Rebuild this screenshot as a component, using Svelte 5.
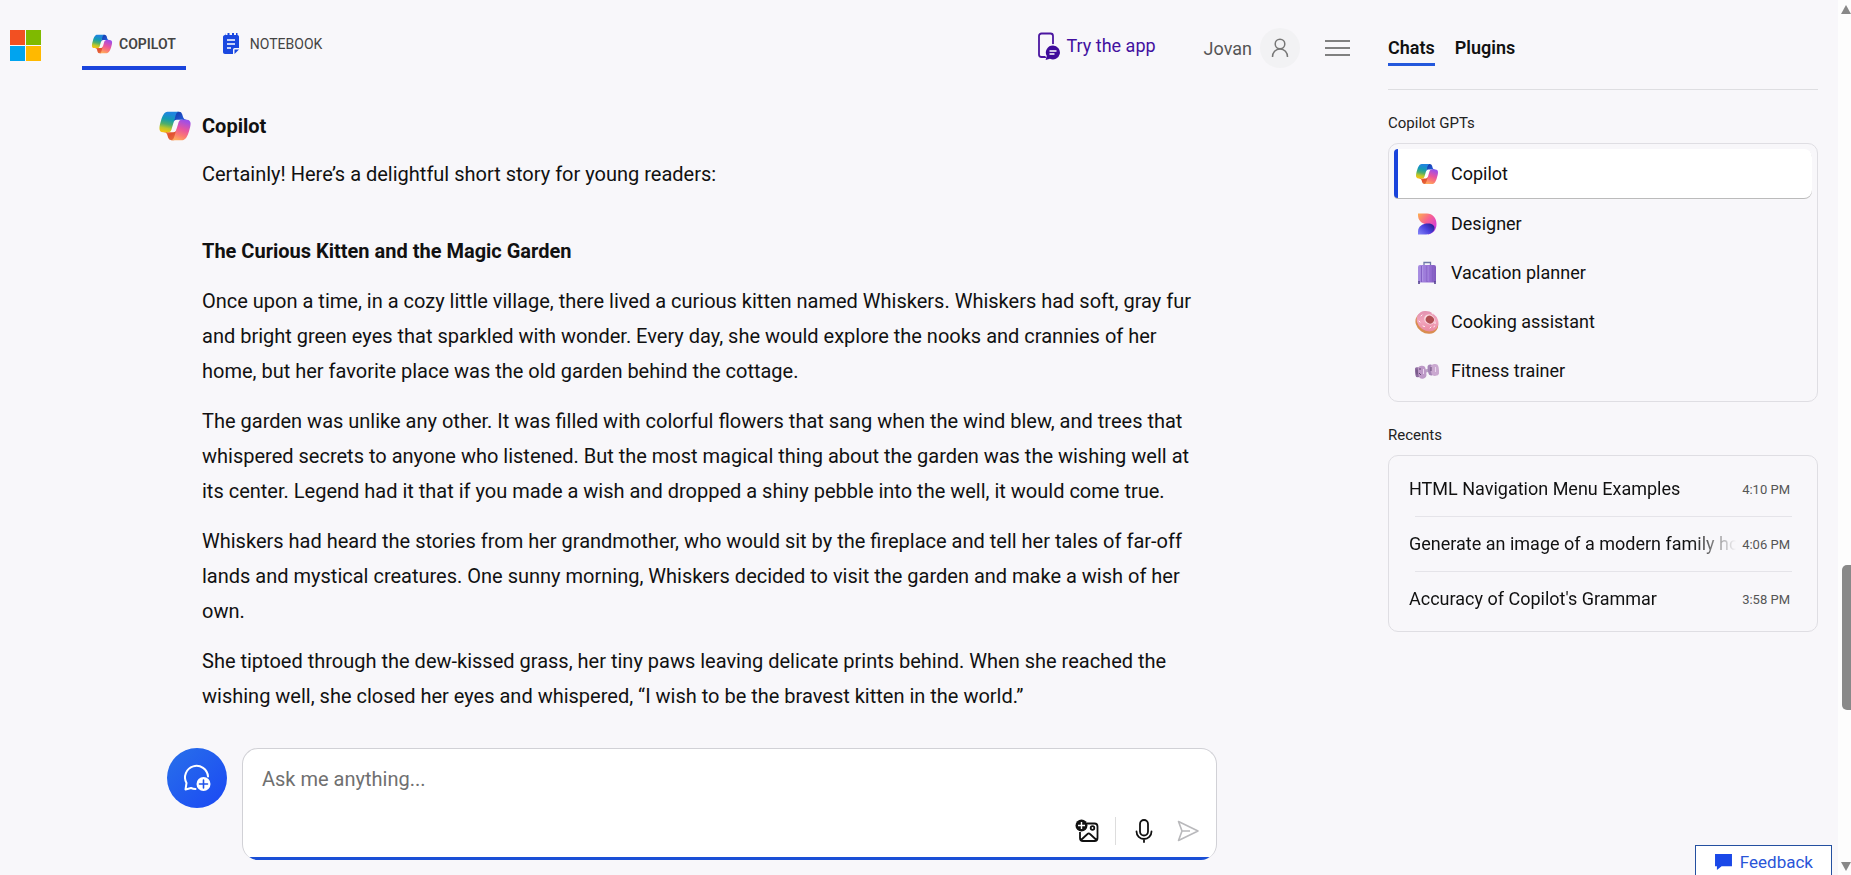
<script lang="ts">
    interface Gpt {
        name: string;
        icon: string;
    }

    interface Recent {
        title: string;
        time: string;
    }

    const gpts: Gpt[] = [
        { name: "Copilot", icon: "copilot" },
        { name: "Designer", icon: "designer" },
        { name: "Vacation planner", icon: "suitcase" },
        { name: "Cooking assistant", icon: "donut" },
        { name: "Fitness trainer", icon: "dumbbell" },
    ];

    const recents: Recent[] = [
        { title: "HTML Navigation Menu Examples", time: "4:10 PM" },
        { title: "Generate an image of a modern family hou", time: "4:06 PM" },
        { title: "Accuracy of Copilot's Grammar", time: "3:58 PM" },
    ];

    const story: string[] = [
        "Once upon a time, in a cozy little village, there lived a curious kitten named Whiskers. Whiskers had soft, gray fur and bright green eyes that sparkled with wonder. Every day, she would explore the nooks and crannies of her home, but her favorite place was the old garden behind the cottage.",
        "The garden was unlike any other. It was filled with colorful flowers that sang when the wind blew, and trees that whispered secrets to anyone who listened. But the most magical thing about the garden was the wishing well at its center. Legend had it that if you made a wish and dropped a shiny pebble into the well, it would come true.",
        "Whiskers had heard the stories from her grandmother, who would sit by the fireplace and tell her tales of far-off lands and mystical creatures. One sunny morning, Whiskers decided to visit the garden and make a wish of her own.",
        "She tiptoed through the dew-kissed grass, her tiny paws leaving delicate prints behind. When she reached the wishing well, she closed her eyes and whispered, “I wish to be the bravest kitten in the world.”",
    ];

    let activeGpt = $state("Copilot");
    let activePanel = $state("Chats");
    let prompt = $state("");
</script>

{#snippet copilotLogo(size: number)}
    <svg width={size} height={size} viewBox="0 0 48 48" aria-hidden="true">
        <path
            fill="url(#cp-top)"
            d="M34.14 7.33A4.63 4.63 0 0 0 29.7 4h-1.35a4.63 4.63 0 0 0-4.55 3.79l-2.32 12.62.58-1.97a4.63 4.63 0 0 1 4.44-3.33h7.85l3.3 1.28 3.17-1.28h-.92a4.63 4.63 0 0 1-4.45-3.33z"
        />
        <path
            fill="url(#cp-bottom)"
            d="M14.33 40.66A4.63 4.63 0 0 0 18.78 44h2.87a4.63 4.63 0 0 0 4.63-4.51l.31-12.16-.65 2.23a4.63 4.63 0 0 1-4.45 3.33h-7.92l-2.82-1.53-3.06 1.53h.92a4.63 4.63 0 0 1 4.44 3.34z"
        />
        <path
            fill="url(#cp-left)"
            d="M29.5 4H13.46C8.88 4 6.13 10.06 4.3 16.11 2.12 23.29-.72 32.89 7.5 32.89h6.93a4.63 4.63 0 0 0 4.45-3.36c1.36-4.75 3.94-13.4 5.52-18.6C25.4 7.4 26.5 4 29.5 4z"
        />
        <path
            fill="url(#cp-right)"
            d="M18.5 44h16.04c4.58 0 7.33-6.06 9.16-12.12 2.17-7.17 5.02-16.77-3.2-16.77h-6.93a4.63 4.63 0 0 0-4.46 3.36c-1.36 4.75-3.93 13.4-5.51 18.6C22.6 40.6 21.5 44 18.5 44z"
        />
    </svg>
{/snippet}

<!-- gradients shared by every icon on the page -->
<svg class="defs" width="0" height="0" aria-hidden="true">
    <defs>
        <linearGradient id="cp-left" x1="0.6" y1="0" x2="0.4" y2="1">
            <stop offset="0.1" stop-color="#1f86dd" />
            <stop offset="0.38" stop-color="#149cb0" />
            <stop offset="0.62" stop-color="#4fae6b" />
            <stop offset="0.82" stop-color="#bcc62b" />
            <stop offset="1" stop-color="#f3c313" />
        </linearGradient>
        <linearGradient id="cp-right" x1="0.7" y1="0" x2="0.35" y2="1">
            <stop offset="0.05" stop-color="#a04fe6" />
            <stop offset="0.45" stop-color="#e8559f" />
            <stop offset="0.75" stop-color="#fb7a72" />
            <stop offset="1" stop-color="#ffab5e" />
        </linearGradient>
        <linearGradient id="cp-top" x1="1" y1="0.8" x2="0.3" y2="0">
            <stop offset="0" stop-color="#2a63e8" />
            <stop offset="1" stop-color="#143fae" />
        </linearGradient>
        <linearGradient id="cp-bottom" x1="0" y1="0" x2="0.6" y2="1">
            <stop offset="0" stop-color="#f9a13a" />
            <stop offset="0.6" stop-color="#e2502f" />
            <stop offset="1" stop-color="#e66a3c" />
        </linearGradient>
        <linearGradient id="ds-top" x1="0" y1="0" x2="1" y2="1">
            <stop offset="0" stop-color="#fdb04c" />
            <stop offset="0.4" stop-color="#f8628f" />
            <stop offset="0.75" stop-color="#d93fd0" />
            <stop offset="1" stop-color="#8238ec" />
        </linearGradient>
        <linearGradient id="ds-bottom" x1="0" y1="0.8" x2="1" y2="0.1">
            <stop offset="0" stop-color="#7c7cf6" />
            <stop offset="0.5" stop-color="#4a3fdc" />
            <stop offset="1" stop-color="#251a86" />
        </linearGradient>
        <linearGradient id="case" x1="0" y1="0" x2="1" y2="0">
            <stop offset="0" stop-color="#a98fe2" />
            <stop offset="0.6" stop-color="#9871d6" />
            <stop offset="1" stop-color="#8059bd" />
        </linearGradient>
        <linearGradient id="glaze" x1="0" y1="0" x2="1" y2="1">
            <stop offset="0" stop-color="#dc8aab" />
            <stop offset="0.5" stop-color="#f2a5bd" />
            <stop offset="1" stop-color="#e67c96" />
        </linearGradient>
    </defs>
</svg>

<div class="page">
    <main>
        <header>
            <a class="brand" href="#home" aria-label="Microsoft">
                <svg width="31" height="31" viewBox="0 0 31 31">
                    <path fill="#f25022" d="M0 0h15v15H0z" />
                    <path fill="#7fba00" d="M16 0h15v15H16z" />
                    <path fill="#00a4ef" d="M0 16h15v15H0z" />
                    <path fill="#ffb900" d="M16 16h15v15H16z" />
                </svg>
            </a>
            <nav class="tabs">
                <a class="tab active" href="#copilot">
                    {@render copilotLogo(22)}
                    COPILOT
                </a>
                <a class="tab" href="#notebook">
                    <svg width="18" height="22" viewBox="0 0 18 22">
                        <path
                            fill="#1a48e0"
                            d="M3.5 0v2h2V0h2v2H10V0h2v2h2V0h1.5v2c1 .2 1.5 1 1.5 2v11h-4.5a1.5 1.5 0 0 0-1.500 1.5V21h-8c-1.200 0-2-.8-2-2V4c0-1 .8-2 2-2z"
                        />
                        <path fill="#1a48e0" d="M12.5 16.5H17L12.5 21z" />
                        <path
                            stroke="#fff"
                            stroke-width="1.3"
                            d="M5 7h8M5 11h8M5 15h4"
                        />
                    </svg>
                    NOTEBOOK
                </a>
            </nav>
            <div class="account">
                <a class="try-app" href="#app-download">
                    <svg width="24" height="28" viewBox="0 0 24 28">
                        <rect
                            x="2"
                            y="1.5"
                            width="14"
                            height="23.5"
                            rx="2.5"
                            fill="none"
                            stroke="#4b16a0"
                            stroke-width="1.8"
                        />
                        <circle cx="16" cy="20.5" r="8.5" fill="#f8f7fa" />
                        <path
                            fill="#3f0c9b"
                            d="M16 13.5a7 7 0 1 1-3.1 13.3L8.6 28l1.2-4A7 7 0 0 1 16 13.5z"
                        />
                        <path
                            stroke="#fff"
                            stroke-width="1.4"
                            stroke-linecap="round"
                            d="M13 19h6M13 22h4"
                        />
                    </svg>
                    Try the app
                </a>
                <button class="user">
                    Jovan
                    <span class="avatar">
                        <svg width="18" height="20" viewBox="0 0 18 20">
                            <g fill="none" stroke="#777" stroke-width="1.5">
                                <circle cx="9" cy="6" r="4.8" />
                                <path d="M1.500 19c0-4.5 3-8 7.5-8s7.5 3.5 7.5 8" />
                            </g>
                        </svg>
                    </span>
                </button>
                <button class="menu" aria-label="Menu">
                    <svg width="25" height="18" viewBox="0 0 25 18">
                        <path
                            stroke="#808080"
                            stroke-width="2"
                            d="M0 2h25M0 9h25M0 16h25"
                        />
                    </svg>
                </button>
            </div>
        </header>

        <article class="message">
            <div class="author">
                {@render copilotLogo(34)}
                <h2>Copilot</h2>
            </div>
            <div class="answer">
                <p class="intro">
                    Certainly! Here’s a delightful short story for young readers:
                </p>
                <h3>The Curious Kitten and the Magic Garden</h3>
                {#each story as paragraph (paragraph)}
                    <p>{paragraph}</p>
                {/each}
            </div>
        </article>

        <form class="composer" onsubmit={(e) => e.preventDefault()}>
            <button type="button" class="new-topic" aria-label="New topic">
                <svg width="30" height="30" viewBox="0 0 30 30">
                    <path
                        fill="none"
                        stroke="#fff"
                        stroke-width="2"
                        stroke-linecap="round"
                        stroke-linejoin="round"
                        d="M26 13.500A11.500 11.500 0 1 0 4.500 20L3.500 26.500l5.500-1.500a12 12 0 0 0 4.500 1"
                    />
                    <circle cx="21.5" cy="21" r="7" fill="#fff" />
                    <path
                        stroke="#1f52ea"
                        stroke-width="1.6"
                        stroke-linecap="round"
                        d="M21.5 17v8M17.5 21h8"
                    />
                </svg>
            </button>
            <div class="box">
                <textarea
                    rows="1"
                    aria-label="Ask me anything"
                    placeholder="Ask me anything..."
                    bind:value={prompt}
                ></textarea>
                <div class="tools">
                    <button type="button" aria-label="Add an image">
                        <svg width="24" height="24" viewBox="0 0 24 24">
                            <g
                                fill="none"
                                stroke="#111"
                                stroke-width="1.8"
                                stroke-linejoin="round"
                            >
                                <path
                                    d="M12 4.5h7.5a3 3 0 0 1 3 3V19a3 3 0 0 1-3 3H8a3 3 0 0 1-3-3v-6M6 21l6.5-6c.8-.8 1.7-.8 2.5 0l6.5 6"
                                />
                                <circle cx="17.5" cy="9" r="1.8" />
                            </g>
                            <circle cx="6.5" cy="6.5" r="6" fill="#111" />
                            <path
                                stroke="#fff"
                                stroke-width="1.4"
                                d="M6.500 3v7M3 6.500h7"
                            />
                        </svg>
                    </button>
                    <span class="divider"></span>
                    <button type="button" aria-label="Use microphone">
                        <svg width="24" height="24" viewBox="0 0 24 24">
                            <g
                                fill="none"
                                stroke="#111"
                                stroke-width="1.8"
                                stroke-linecap="round"
                            >
                                <rect x="8" y="1" width="8" height="15.5" rx="4" />
                                <path d="M4.500 12.500a7.500 7.500 0 0 0 15 0M12 20v3" />
                            </g>
                        </svg>
                    </button>
                    <button aria-label="Submit">
                        <svg width="24" height="24" viewBox="0 0 24 24">
                            <path
                                fill="none"
                                stroke="#b9b9bc"
                                stroke-width="1.6"
                                stroke-linejoin="round"
                                d="M2.5 2.5 22 12 2.5 21.5 6 12zM6 12h8"
                            />
                        </svg>
                    </button>
                </div>
                <div class="accent"></div>
            </div>
        </form>
    </main>

    <aside>
        <div class="panel-tabs">
            {#each ["Chats", "Plugins"] as panel (panel)}
                <button
                    class:selected={activePanel === panel}
                    onclick={() => (activePanel = panel)}
                >
                    {panel}
                </button>
            {/each}
        </div>

        <h4>Copilot GPTs</h4>
        <div class="card gpts">
            {#each gpts as gpt (gpt.name)}
                <button
                    class="gpt"
                    class:current={activeGpt === gpt.name}
                    onclick={() => (activeGpt = gpt.name)}
                >
                    {#if gpt.icon === "copilot"}
                        {@render copilotLogo(24)}
                    {:else if gpt.icon === "designer"}
                        <svg width="24" height="24" viewBox="0 0 24 24">
                            <path
                                fill="url(#ds-top)"
                                d="M3 1.5h9c5.500 0 9.500 4.500 9.500 10.500s-3.500 9.500-8.500 10.500L11 12.5C6 11 3 8 3 3z"
                            />
                            <path
                                fill="url(#ds-bottom)"
                                d="M3 22.5v-3C3 14 8 11.5 13 11.5c4 0 6.500 2 6.500 4.500 0 3.500-3.500 6.500-8.500 6.500z"
                            />
                        </svg>
                    {:else if gpt.icon === "suitcase"}
                        <svg width="24" height="24" viewBox="0 0 24 24">
                            <path
                                fill="none"
                                stroke="#6e79a8"
                                stroke-width="1.3"
                                d="M9 5V1.500h6.500V5"
                            />
                            <rect
                                x="3"
                                y="4"
                                width="18"
                                height="17.5"
                                rx="2"
                                fill="url(#case)"
                            />
                            <path
                                stroke="#8460c4"
                                d="M6.500 5v16M12 5v16M17.500 5v16"
                            />
                            <path stroke="#b7a0ea" stroke-width="0.6" d="M7.500 5v15M13 5v15" />
                            <path
                                stroke="#554291"
                                stroke-width="1.6"
                                d="M4 20v3M20 20v3"
                            />
                        </svg>
                    {:else if gpt.icon === "donut"}
                        <svg width="24" height="24" viewBox="0 0 24 24">
                            <g transform="rotate(35 12 12)">
                                <ellipse
                                    cx="12.5"
                                    cy="13"
                                    rx="12"
                                    ry="10"
                                    fill="#d98d50"
                                />
                                <ellipse
                                    cx="12"
                                    cy="11"
                                    rx="11.5"
                                    ry="9.5"
                                    fill="url(#glaze)"
                                />
                                <ellipse cx="12.5" cy="8.5" rx="5.5" ry="4.8" fill="#f9d7df" />
                                <ellipse cx="13" cy="8.5" rx="4.2" ry="3.8" fill="#b04d52" />
                            </g>
                            <path
                                stroke="#fff4f6"
                                stroke-linecap="round"
                                d="m4 11 1 1M8 16l1.500.5M15 18l1-1M20 12v1.500M6 6l1-1M17 3.500l1 .5M19 17l.5-1"
                            />
                        </svg>
                    {:else}
                        <svg width="24" height="24" viewBox="0 0 24 24">
                            <path stroke="#b9a3c4" stroke-width="3" d="m8 13 9-3" />
                            <g transform="rotate(-8 12 12)">
                                <rect x="0" y="7" width="5" height="10" rx="2.5" fill="#8e6c9f" />
                                <rect x="3" y="6" width="8" height="13" rx="4" fill="#bd98c7" />
                                <rect x="13" y="6" width="6" height="11" rx="3" fill="#a585b6" />
                                <rect x="16" y="6" width="8" height="12" rx="4" fill="#caa9d0" />
                            </g>
                            <path
                                stroke="#644a74"
                                d="M2 10.500v5M5 9v2M4 14l2 2M16 8v4"
                            />
                            <path stroke="#ead6ee" d="M8.500 10v5M20.500 8v5" />
                        </svg>
                    {/if}
                    {gpt.name}
                </button>
            {/each}
        </div>

        <h4>Recents</h4>
        <ul class="card recents">
            {#each recents as recent (recent.title)}
                <li>
                    <a href="#chat">
                        <span class="title">{recent.title}</span>
                        <span class="time">{recent.time}</span>
                    </a>
                </li>
            {/each}
        </ul>
    </aside>

    <div class="scrollbar" aria-hidden="true">
        <span class="arrow up"></span>
        <span class="thumb"></span>
        <span class="arrow down"></span>
    </div>
</div>

<button class="feedback">
    <svg width="17" height="16" viewBox="0 0 18 17">
        <path fill="#1a48e8" d="M0 0h18v13H7l-5 4v-4H0z" />
    </svg>
    Feedback
</button>

<style>
    :global(body) {
        background: #f8f7fa;
        color: #111;
        font-family: Roboto, "Liberation Sans", sans-serif;
    }

    button {
        background: none;
        border: none;
        padding: 0;
        color: inherit;
        font: inherit;
        cursor: pointer;
    }

    a {
        color: inherit;
        text-decoration: none;
    }

    svg {
        display: block;
        flex: none;
    }

    .defs {
        position: absolute;
    }

    .page {
        display: grid;
        grid-template-columns: minmax(0, 1fr) 454px 13px;
        min-height: 100vh;
    }

    main {
        display: flex;
        flex-direction: column;
    }

    header {
        display: flex;
        align-items: flex-start;
        padding: 30px 34px 0 10px;
    }

    .tabs {
        display: flex;
        gap: 26px;
        margin-left: 41px;
    }

    .tab {
        display: flex;
        align-items: center;
        gap: 10px;
        padding: 0 10px 8px;
        border-bottom: 4px solid transparent;
        color: #444;
        font-size: 14px;
        line-height: 28px;
    }

    .tab.active {
        gap: 6px;
        padding: 0 10px 8px 9px;
        border-color: #1a44dc;
        font-weight: 600;
    }

    .account {
        display: flex;
        align-items: center;
        height: 36px;
        margin-left: auto;
        font-size: 18px;
    }

    .try-app {
        display: flex;
        align-items: center;
        gap: 5px;
        padding-bottom: 5px;
        color: #4311a0;
    }

    .user {
        display: flex;
        align-items: center;
        gap: 8px;
        margin-left: 48px;
        color: #555;
    }

    .avatar {
        display: grid;
        place-items: center;
        width: 40px;
        height: 40px;
        border-radius: 50%;
        background: #f2f2f4;
    }

    .menu {
        margin-left: 25px;
    }

    .message {
        width: 100%;
        max-width: 1068px;
        margin: 39px auto 0;
    }

    .author {
        display: flex;
        align-items: center;
        gap: 10px;
    }

    .author h2 {
        margin: 0;
        font-size: 20px;
        line-height: 32px;
        font-weight: 700;
    }

    .answer {
        padding: 0 22px 0 44px;
        font-size: 20px;
        line-height: 35px;
    }

    .answer p {
        margin: 0 0 15px;
    }

    .answer .intro {
        margin: 14px 0 42px;
    }

    .answer h3 {
        margin: 0 0 15px;
        font-size: 20px;
        font-weight: 700;
    }

    .composer {
        position: sticky;
        bottom: 0;
        display: flex;
        align-items: flex-start;
        gap: 15px;
        width: 100%;
        max-width: 1050px;
        margin: auto auto 0;
        padding-bottom: 15px;
    }

    .new-topic {
        display: grid;
        flex: none;
        place-items: center;
        width: 60px;
        height: 60px;
        border-radius: 50%;
        background: linear-gradient(135deg, #2870ea, #1b48f4);
    }

    .box {
        flex: 1;
        overflow: hidden;
        border: 1px solid #d1d1d6;
        border-bottom: none;
        border-radius: 16px;
        background: #fff;
    }

    .accent {
        height: 3px;
        background: #1a4fd6;
    }

    textarea {
        display: block;
        box-sizing: border-box;
        width: 100%;
        height: 60px;
        padding: 16px 19px 0;
        border: none;
        outline: none;
        resize: none;
        background: none;
        color: #111;
        font: inherit;
        font-size: 20px;
        line-height: 28px;
    }

    textarea::placeholder {
        color: #707070;
    }

    .tools {
        display: flex;
        align-items: center;
        justify-content: flex-end;
        gap: 20px;
        height: 44px;
        padding: 0 16px 4px 0;
    }

    .divider {
        width: 1px;
        height: 28px;
        margin: 0 -4px;
        background: #ddd;
    }

    aside {
        padding: 34px 20px 0 4px;
    }

    .panel-tabs {
        display: flex;
        gap: 20px;
        padding-bottom: 23px;
        border-bottom: 1px solid #dedee1;
    }

    .panel-tabs button {
        padding-bottom: 2px;
        border-bottom: 3px solid transparent;
        font-size: 18px;
        line-height: 27px;
        font-weight: 600;
    }

    .panel-tabs .selected {
        border-color: #2458dc;
    }

    h4 {
        margin: 23px 0 10px;
        color: #222;
        font-size: 15px;
        line-height: 20px;
        font-weight: 400;
    }

    .card {
        border: 1px solid #dfdee3;
        border-radius: 10px;
    }

    .gpts {
        display: flex;
        flex-direction: column;
        padding: 5px 5px 6px;
    }

    .gpt {
        display: flex;
        align-items: center;
        gap: 12px;
        height: 49px;
        padding-left: 17px;
        border-left: 4px solid transparent;
        border-radius: 4px 8px 8px 4px;
        font-size: 18px;
    }

    .gpt.current {
        margin-bottom: 1px;
        border-left-color: #1a44dc;
        background: #fff;
        box-shadow: 0 1px 0 #bbb;
    }

    .recents {
        margin: 0;
        padding: 6px 25px 5px 20px;
        list-style: none;
    }

    .recents li {
        margin-left: 6px;
    }

    .recents li + li {
        border-top: 1px solid #e5e4e9;
    }

    .recents a {
        display: flex;
        align-items: center;
        gap: 6px;
        height: 54px;
        margin-left: -6px;
        padding-right: 2px;
    }

    .title {
        flex: 1;
        overflow: hidden;
        white-space: nowrap;
        font-size: 18px;
        line-height: 26px;
        mask-image: linear-gradient(to right, #000 calc(100% - 44px), transparent);
    }

    .time {
        color: #555;
        font-size: 13px;
    }

    .scrollbar {
        position: sticky;
        top: 0;
        display: flex;
        flex-direction: column;
        align-items: flex-end;
        height: 100vh;
        overflow: hidden;
        background: #fdfdfd;
    }

    .arrow {
        flex: none;
        border: 5px solid transparent;
    }

    .up {
        margin-top: 5px;
        border-top-width: 0;
        border-bottom: 9px solid #888;
    }

    .thumb {
        width: 9px;
        height: 145px;
        margin-top: auto;
        border-radius: 5px 0 0 5px;
        background: #898989;
    }

    .down {
        margin: 152px 0 4px;
        border-bottom-width: 0;
        border-top: 9px solid #888;
    }

    .feedback {
        position: fixed;
        right: 19px;
        bottom: 0;
        display: flex;
        align-items: center;
        gap: 8px;
        box-sizing: border-box;
        height: 30px;
        padding: 3px 18px 0 19px;
        border: 1px solid #2450a0;
        border-bottom: none;
        background: #fff;
        color: #2a55d8;
        font-size: 17px;
    }
</style>
